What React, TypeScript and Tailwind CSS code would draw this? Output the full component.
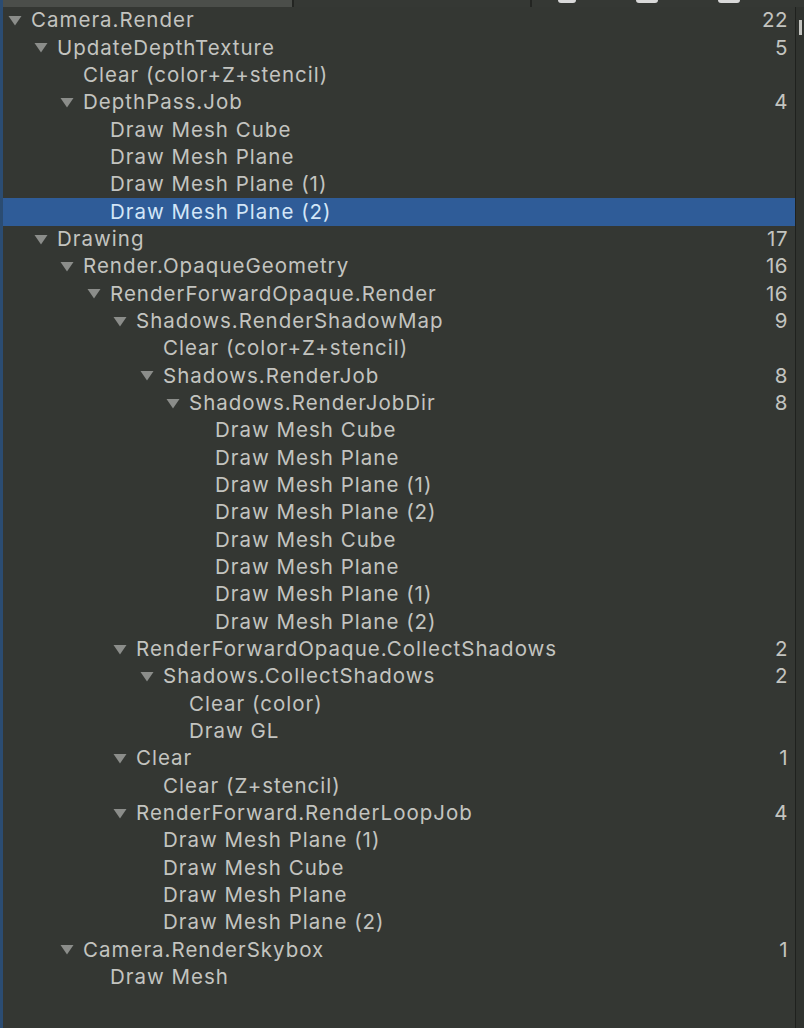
import React from 'react'

type Row = { label: string; level: number; count?: number; open?: boolean; selected?: boolean }

const rows: Row[] = [
  { label: 'Camera.Render', level: 0, count: 22, open: true },
  { label: 'UpdateDepthTexture', level: 1, count: 5, open: true },
  { label: 'Clear (color+Z+stencil)', level: 2 },
  { label: 'DepthPass.Job', level: 2, count: 4, open: true },
  { label: 'Draw Mesh Cube', level: 3 },
  { label: 'Draw Mesh Plane', level: 3 },
  { label: 'Draw Mesh Plane (1)', level: 3 },
  { label: 'Draw Mesh Plane (2)', level: 3, selected: true },
  { label: 'Drawing', level: 1, count: 17, open: true },
  { label: 'Render.OpaqueGeometry', level: 2, count: 16, open: true },
  { label: 'RenderForwardOpaque.Render', level: 3, count: 16, open: true },
  { label: 'Shadows.RenderShadowMap', level: 4, count: 9, open: true },
  { label: 'Clear (color+Z+stencil)', level: 5 },
  { label: 'Shadows.RenderJob', level: 5, count: 8, open: true },
  { label: 'Shadows.RenderJobDir', level: 6, count: 8, open: true },
  { label: 'Draw Mesh Cube', level: 7 },
  { label: 'Draw Mesh Plane', level: 7 },
  { label: 'Draw Mesh Plane (1)', level: 7 },
  { label: 'Draw Mesh Plane (2)', level: 7 },
  { label: 'Draw Mesh Cube', level: 7 },
  { label: 'Draw Mesh Plane', level: 7 },
  { label: 'Draw Mesh Plane (1)', level: 7 },
  { label: 'Draw Mesh Plane (2)', level: 7 },
  { label: 'RenderForwardOpaque.CollectShadows', level: 4, count: 2, open: true },
  { label: 'Shadows.CollectShadows', level: 5, count: 2, open: true },
  { label: 'Clear (color)', level: 6 },
  { label: 'Draw GL', level: 6 },
  { label: 'Clear', level: 4, count: 1, open: true },
  { label: 'Clear (Z+stencil)', level: 5 },
  { label: 'RenderForward.RenderLoopJob', level: 4, count: 4, open: true },
  { label: 'Draw Mesh Plane (1)', level: 5 },
  { label: 'Draw Mesh Cube', level: 5 },
  { label: 'Draw Mesh Plane', level: 5 },
  { label: 'Draw Mesh Plane (2)', level: 5 },
  { label: 'Camera.RenderSkybox', level: 2, count: 1, open: true },
  { label: 'Draw Mesh', level: 3 },
]

// leaf rows sit one indent deeper than their parent label, branch rows carry the arrow
const indent = [
  'pl-[8px]',
  'pl-[34px]',
  'pl-[60px]',
  'pl-[87px]',
  'pl-[113px]',
  'pl-[140px]',
  'pl-[166px]',
  'pl-[192px]',
]

function Arrow() {
  return (
    <svg width="14" height="11" viewBox="0 0 14 11" className="shrink-0">
      <path d="M0.5 1 L13.5 1 L7 10.5 Z" fill="#8b8d8a" />
    </svg>
  )
}

export default function App() {
  return (
    <div
      className="relative w-[804px] h-[1028px] overflow-hidden bg-[#343733] text-[#c3c4c0]"
      style={{ fontFamily: 'Inter, "Noto Sans", sans-serif' }}
    >
      {/* Top tab strip */}
      <div className="flex h-[7px]">
        <div className="w-[292px] bg-[#4b4e4a]" />
        <div className="w-[2px] bg-[#232522]" />
        <div className="w-[236px] bg-[#353834]" />
        <div className="w-[2px] bg-[#232522]" />
        <div className="flex-1 bg-[#353834] flex items-start gap-[60px] pl-[26px]">
          <div className="w-[18px] h-[3px] rounded-b-full bg-[#d9d9d9]" />
          <div className="w-[22px] h-[3px] rounded-b-full bg-[#d9d9d9]" />
          <div className="w-[22px] h-[3px] rounded-b-full bg-[#d9d9d9]" />
        </div>
      </div>

      <div className="flex">
        {/* Tree */}
        <div className="w-[795px] shrink-0 flex flex-col">
          {rows.map((r, i) => (
            <div
              key={i}
              className={`flex items-center h-[27.34px] pr-[7px] text-[20.5px] tracking-[1px] ${indent[r.level]} ${
                r.selected ? 'bg-[#2f5c98] text-[#d3e6f7]' : ''
              }`}
            >
              {r.open ? <Arrow /> : null}
              <span className={`${r.open ? 'ml-[9px]' : 'ml-[23px]'} whitespace-nowrap leading-none`}>{r.label}</span>
              <span className="ml-auto leading-none tracking-[0.5px]">{r.count ?? ''}</span>
            </div>
          ))}
        </div>
        {/* Next column edge, only a sliver of its first glyph shows */}
        <div className="w-px h-[1021px] shrink-0 bg-[#1f211e]" />
        <div className="flex-1 bg-[#30332f] pt-[13px] pl-[3px]">
          <div className="w-[3px] h-[15px] bg-[#c3c4c0]" />
        </div>
      </div>

      {/* Window focus stripe */}
      <div className="absolute left-0 top-0 w-[3px] h-full bg-[#2b4c72]" />
    </div>
  )
}
